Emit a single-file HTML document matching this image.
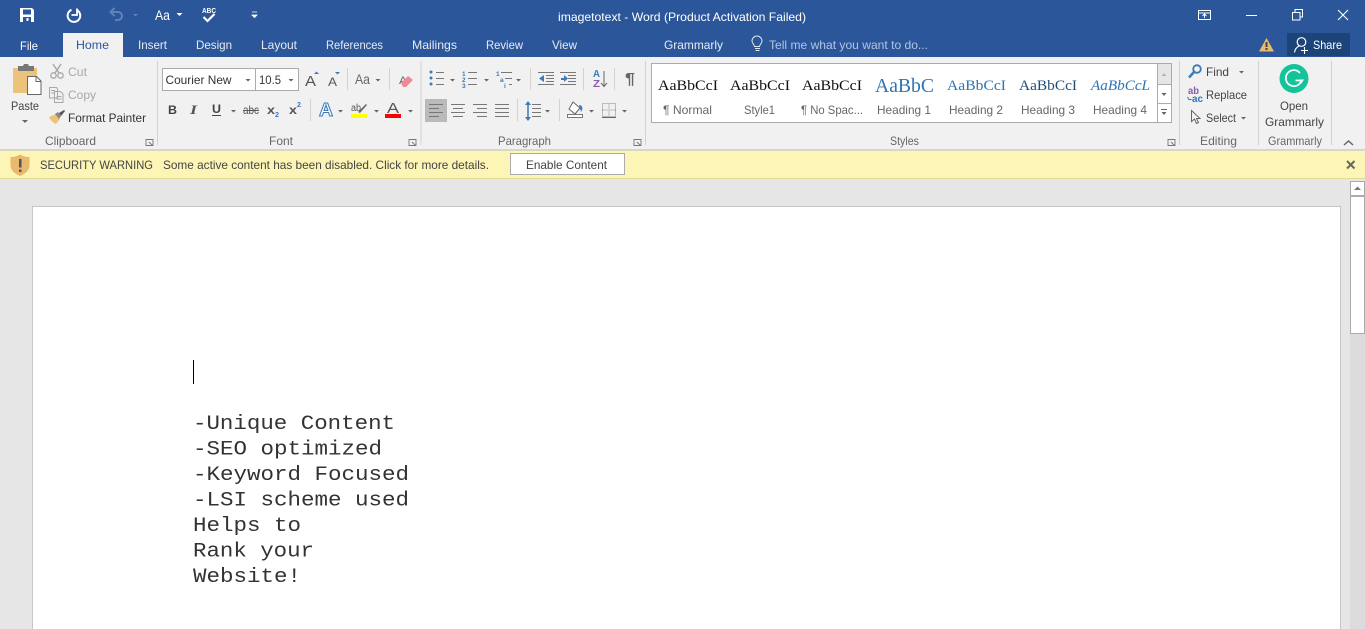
<!DOCTYPE html>
<html><head><meta charset="utf-8"><title>imagetotext - Word</title>
<style>
html,body{margin:0;padding:0;width:1365px;height:629px;overflow:hidden;background:#e6e6e6}
svg{display:block}
text{font-family:"Liberation Sans",sans-serif;font-size:12px;fill:#444;white-space:pre}
.w{fill:#fff}.t{fill:#e6ebf3}.g{fill:#666}.d{fill:#a8a8a8}
.s{font-family:"Liberation Serif",serif;font-size:15px;fill:#111}
.m{font-family:"Liberation Mono",monospace;font-size:20px;fill:#333}
.c{fill:#666}
</style></head><body>
<svg width="1365" height="629" viewBox="0 0 1365 629" xmlns="http://www.w3.org/2000/svg">
<!-- backgrounds -->
<rect width="1365" height="57" fill="#2b579a"/>
<rect y="57" width="1365" height="92" fill="#f1f1f1"/>
<rect y="149" width="1365" height="2" fill="#d8d8c0"/>
<rect y="151" width="1365" height="27" fill="#fcf5b5"/>
<rect y="178" width="1365" height="1" fill="#e2dc94"/>
<rect y="179" width="1365" height="450" fill="#e6e6e6"/>
<rect x="63" y="33" width="60" height="24" fill="#f1f1f1"/>

<!-- QAT -->
<path d="M20 8h12l2 2v12H20z M23 9.500v5h8v-5z M23 17v5h8v-5z" fill="#fff" fill-rule="evenodd"/>
<path d="M26.500 18h2v3h-2z" fill="#fff"/>
<path d="M71.500 9.800a6.300 6.300 0 1 0 5.300.2" fill="none" stroke="#fff" stroke-width="2"/>
<path d="M77 8.500v6.500h-5.500" fill="none" stroke="#fff" stroke-width="1.800"/>
<path d="M111 12h7a4 4 0 0 1 0 8h-3M114.500 8l-4 4 4 4" fill="none" stroke="#5f82b8" stroke-width="2"/>
<path d="M133 14h5l-2.500 2.500z" fill="#5f82b8"/>
<text x="155" y="20" class="w" style="font-size:14px" textLength="15" lengthAdjust="spacingAndGlyphs">Aa</text>
<path d="M176.500 13h6l-3 3z" fill="#fff"/>
<text x="202" y="13" class="w" style="font-size:7.500px;font-weight:bold" textLength="14" lengthAdjust="spacingAndGlyphs">ABC</text>
<path d="M203.500 17l4 4 7-7" fill="none" stroke="#fff" stroke-width="2.200"/>
<path d="M252 12h5M252 15h5l-2.500 2.500z" fill="#fff" stroke="#fff" stroke-width=".8"/>

<!-- title -->
<text x="558" y="21" class="w" textLength="248" lengthAdjust="spacingAndGlyphs">imagetotext - Word (Product Activation Failed)</text>
<!-- window controls -->
<path d="M1198.500 10.500h12v9h-12zM1198.500 13h12M1204.500 18v-4M1202.500 16l2-2 2 2" fill="none" stroke="#fff"/>
<path d="M1246 15.500h11" stroke="#fff"/>
<path d="M1292.500 12.500h7.500v7.500h-7.500zM1295 12v-2.500h7.500V17H1300" fill="none" stroke="#fff"/>
<path d="M1338 10l10 10M1348 10l-10 10" stroke="#fff" stroke-width="1.100"/>

<!-- tabs -->
<text x="20" y="50" class="w" textLength="18" lengthAdjust="spacingAndGlyphs">File</text>
<text x="76" y="49" style="fill:#2b579a" textLength="33" lengthAdjust="spacingAndGlyphs">Home</text>
<text x="138" y="49" class="t" textLength="29" lengthAdjust="spacingAndGlyphs">Insert</text>
<text x="196" y="49" class="t" textLength="36" lengthAdjust="spacingAndGlyphs">Design</text>
<text x="261" y="49" class="t" textLength="36" lengthAdjust="spacingAndGlyphs">Layout</text>
<text x="326" y="49" class="t" textLength="57" lengthAdjust="spacingAndGlyphs">References</text>
<text x="412" y="49" class="t" textLength="45" lengthAdjust="spacingAndGlyphs">Mailings</text>
<text x="486" y="49" class="t" textLength="37" lengthAdjust="spacingAndGlyphs">Review</text>
<text x="552" y="49" class="t" textLength="25" lengthAdjust="spacingAndGlyphs">View</text>
<text x="664" y="49" class="t" textLength="59" lengthAdjust="spacingAndGlyphs">Grammarly</text>
<path d="M755 48.500h5M755.500 50.500h4M754.500 46.500c0-2-2.500-3-2.500-5.500a5 5 0 0 1 10 0c0 2.500-2.500 3.500-2.500 5.500z" fill="none" stroke="#dfe6f0"/>
<text x="769" y="49" style="fill:#b4c5de" textLength="159" lengthAdjust="spacingAndGlyphs">Tell me what you want to do...</text>
<path d="M1266.500 38l7.500 13.500h-15z" fill="#e9b96e"/>
<path d="M1265.500 42h2v5h-2zM1265.500 48h2v2h-2z" fill="#444"/>
<rect x="1287" y="33" width="63" height="23" fill="#1c4478"/>
<circle cx="1301.500" cy="42" r="4.300" fill="none" stroke="#fff" stroke-width="1.200"/>
<path d="M1294.500 52.500c.5-3.500 2.500-5.500 4.500-6.500M1304.500 47v7M1301 50.500h7" fill="none" stroke="#fff" stroke-width="1.100"/>
<text x="1313" y="49" class="w" textLength="29" lengthAdjust="spacingAndGlyphs">Share</text>

<!-- separators -->
<path d="M157.500 61v84M421 61v84M645.500 61v84M1179.500 61v84M1258.500 61v84M1331.500 61v84" stroke="#d2d2d2"/>

<!-- Clipboard -->
<path d="M13 68h24v25H13z" fill="#edc37c"/>
<path d="M18 66h5l1-2h4l1 2h5v5H18z" fill="#777"/>
<path d="M27.500 76.500h9l4.500 4.500v13.500H27.500z" fill="#fff" stroke="#666"/>
<path d="M36 77v4.500h5" fill="none" stroke="#666"/>
<text x="11" y="110" textLength="28" lengthAdjust="spacingAndGlyphs">Paste</text>
<path d="M22 120h6l-3 3z" class="c"/>
<path d="M53 64l6 9M61 64l-6 9" stroke="#a8a8a8" stroke-width="1.500"/>
<circle cx="53.500" cy="75.500" r="2.700" fill="none" stroke="#a8a8a8" stroke-width="1.300"/>
<circle cx="60.500" cy="75.500" r="2.700" fill="none" stroke="#a8a8a8" stroke-width="1.300"/>
<text x="68" y="76" class="d" textLength="19" lengthAdjust="spacingAndGlyphs">Cut</text>
<path d="M49.500 87.500h7l1 1.500v9h-8zM54.500 91.500h6l2.500 2.500v8.500h-8.500zM51 90.500h4M51 93h3M56.500 96.500h5M56.500 99h5" fill="#f1f1f1" stroke="#a8a8a8"/>
<text x="68" y="99" class="d" textLength="28" lengthAdjust="spacingAndGlyphs">Copy</text>
<path d="M49 117l7-3 4 5-4 5c-2-.5-6-4-7-7z" fill="#edc37c"/>
<path d="M55 114l3-2 3 4-2 3z" fill="#888"/>
<path d="M59 113l5-3 1 1-4 5z" fill="#555"/>
<text x="68" y="122" style="fill:#333" textLength="78" lengthAdjust="spacingAndGlyphs">Format Painter</text>
<text x="45" y="145" class="g" textLength="51" lengthAdjust="spacingAndGlyphs">Clipboard</text>
<path id="dl" d="M146.500 139.500h6.500v6M146 139v6.500h7.500M149 142l3.500 3.500M150 145.500h3v-3" fill="none" stroke="#777" stroke-width=".9"/>

<!-- Font -->
<rect x="162.500" y="68.500" width="93" height="22" fill="#fff" stroke="#ababab"/>
<rect x="255.500" y="68.500" width="43" height="22" fill="#fff" stroke="#ababab"/>
<text x="165.500" y="84" style="fill:#333" textLength="66" lengthAdjust="spacingAndGlyphs">Courier New</text>
<text x="259" y="84" style="fill:#333" textLength="22" lengthAdjust="spacingAndGlyphs">10.5</text>
<path d="M245.500 79h5l-2.500 2.500zM288.500 79h5l-2.500 2.500z" class="c"/>
<text x="305" y="86" style="font-size:15px;fill:#555" textLength="11" lengthAdjust="spacingAndGlyphs">A</text>
<path d="M314 74h5l-2.500-2.500z" fill="#3d7ab8"/>
<text x="328" y="86" style="font-size:12px;fill:#555" textLength="9" lengthAdjust="spacingAndGlyphs">A</text>
<path d="M335 72h5l-2.500 2.500z" fill="#3d7ab8"/>
<path d="M347.500 68v22M389.500 68v22M310.500 99v22" stroke="#d2d2d2"/>
<text x="355" y="84" style="font-size:14px;fill:#666" textLength="15" lengthAdjust="spacingAndGlyphs">Aa</text>
<path d="M375.500 79h5l-2.500 2.500z" class="c"/>
<text x="399" y="84" style="font-size:11px;fill:#666" textLength="8" lengthAdjust="spacingAndGlyphs">A</text>
<path d="M401 83l7-7 5 4-7 7h-3z" fill="#ee8a96"/>

<text x="168" y="114" style="font-weight:bold;fill:#444" textLength="9" lengthAdjust="spacingAndGlyphs">B</text>
<text x="190" y="114" style="font-style:italic;font-family:'Liberation Serif',serif;font-size:13px;fill:#555;font-weight:bold" textLength="7" lengthAdjust="spacingAndGlyphs">I</text>
<text x="212" y="113" style="font-weight:bold;fill:#444" textLength="9" lengthAdjust="spacingAndGlyphs">U</text>
<path d="M212 115.500h9" stroke="#444"/>
<path d="M231 110h5l-2.500 2.500zM338 110h5l-2.500 2.500zM374 110h5l-2.500 2.500zM408 110h5l-2.500 2.500z" class="c"/>
<text x="243" y="114" style="fill:#555" textLength="16" lengthAdjust="spacingAndGlyphs">abc</text>
<path d="M243 110.500h16" stroke="#555"/>
<text x="267" y="114" style="font-weight:bold;fill:#555" textLength="8" lengthAdjust="spacingAndGlyphs">x</text>
<text x="275" y="117" style="font-size:7px;fill:#3d7ab8;font-weight:bold" textLength="4" lengthAdjust="spacingAndGlyphs">2</text>
<text x="289" y="114" style="font-weight:bold;fill:#555" textLength="8" lengthAdjust="spacingAndGlyphs">x</text>
<text x="297" y="107" style="font-size:7px;fill:#3d7ab8;font-weight:bold" textLength="4" lengthAdjust="spacingAndGlyphs">2</text>
<text x="319" y="116" style="font-size:18px;font-weight:bold;fill:#fff;stroke:#3d7ab8;stroke-width:1" textLength="14" lengthAdjust="spacingAndGlyphs">A</text>
<text x="351" y="111" style="font-size:10px;fill:#555" textLength="10" lengthAdjust="spacingAndGlyphs">ab</text>
<path d="M358 112l8-8 1 1-7 8z" fill="#666"/>
<rect x="351" y="114" width="16" height="4" fill="#ff0"/>
<text x="387" y="113" style="font-size:15px;fill:#555" textLength="12" lengthAdjust="spacingAndGlyphs">A</text>
<rect x="385" y="114" width="16" height="4" fill="#f00"/>
<text x="269" y="145" class="g" textLength="24" lengthAdjust="spacingAndGlyphs">Font</text>
<use href="#dl" x="263"/>

<!-- Paragraph -->
<circle cx="431" cy="72" r="1.500" fill="#3d7ab8"/><circle cx="431" cy="78" r="1.500" fill="#3d7ab8"/><circle cx="431" cy="84" r="1.500" fill="#3d7ab8"/>
<path d="M436 72.500h8M436 78.500h8M436 84.500h8" stroke="#777"/>
<path d="M450 79h5l-2.500 2.500zM484 79h5l-2.500 2.500zM516 79h5l-2.500 2.500zM545 110h5l-2.500 2.500zM589 110h5l-2.500 2.500zM622 110h5l-2.500 2.500z" class="c"/>
<text x="462" y="76" style="font-size:6.500px;fill:#3d7ab8;font-weight:bold">1</text>
<text x="462" y="82" style="font-size:6.500px;fill:#3d7ab8;font-weight:bold">2</text>
<text x="462" y="88" style="font-size:6.500px;fill:#3d7ab8;font-weight:bold">3</text>
<path d="M468 72.500h9M468 78.500h9M468 84.500h9" stroke="#777"/>
<text x="496" y="76" style="font-size:6.500px;fill:#3d7ab8;font-weight:bold">1</text>
<text x="500" y="82" style="font-size:6.500px;fill:#3d7ab8;font-weight:bold">a</text>
<text x="504" y="88" style="font-size:6.500px;fill:#3d7ab8;font-weight:bold">i</text>
<path d="M501 72.500h11M505 78.500h7M509 84.500h3" stroke="#777"/>
<path d="M530.500 68v22M583.500 68v22M614.500 68v22M517.500 99v22M559.500 99v22" stroke="#d2d2d2"/>
<path d="M538 72.500h16M546 75.500h8M546 78.500h8M546 81.500h8M538 84.500h16M560 72.500h16M568 75.500h8M568 78.500h8M568 81.500h8M560 84.500h16" stroke="#777"/>
<path d="M544 75v7l-5-3.500z" fill="#3d7ab8"/>
<path d="M561 78h3v-3l4 3.500-4 3.500v-2h-3z" fill="#3d7ab8"/>
<text x="593" y="77" style="font-size:10px;font-weight:bold;fill:#3d7ab8" textLength="7" lengthAdjust="spacingAndGlyphs">A</text>
<text x="593" y="87" style="font-size:10px;font-weight:bold;fill:#8a5ca8" textLength="7" lengthAdjust="spacingAndGlyphs">Z</text>
<path d="M604 71v15M601 83l3 3.500 3-3.500" fill="none" stroke="#666"/>
<text x="625" y="84" style="font-size:16px;font-weight:bold;fill:#666" textLength="10" lengthAdjust="spacingAndGlyphs">¶</text>
<rect x="425" y="99" width="22" height="23" fill="#bababa"/>
<path d="M429 104.500h14M429 108.500h10M429 112.500h14M429 116.500h10M451 104.500h14M453 108.500h10M451 112.500h14M453 116.500h10M473 104.500h14M477 108.500h10M473 112.500h14M477 116.500h10M495 104.500h14M495 108.500h14M495 112.500h14M495 116.500h14" stroke="#777"/>
<path d="M532 108.500h9M532 112.500h9M532 116.500h9M532 104.500h9" stroke="#777"/>
<path d="M528 102v18" stroke="#3d7ab8" stroke-width="1.500"/>
<path d="M525 105l3-4 3 4zM525 117l3 4 3-4z" fill="#3d7ab8"/>
<path d="M573 102l7 6-5 6-6-5z" fill="#fff" stroke="#666"/>
<path d="M579 105c3 0 4 3 3 5l-1 2z" fill="#3d7ab8"/>
<rect x="567.500" y="114.500" width="15" height="3" fill="#fff" stroke="#777"/>
<path d="M602.500 103.500h13v13h-13zM609 103.500v13M602.500 110h13" fill="none" stroke="#888" stroke-dasharray="1 1"/>
<path d="M602 117.500h14" stroke="#666"/>
<text x="498" y="145" class="g" textLength="53" lengthAdjust="spacingAndGlyphs">Paragraph</text>
<use href="#dl" x="488"/>

<!-- Styles -->
<rect x="651.500" y="63.500" width="520" height="59" fill="#fff" stroke="#ababab"/>
<rect x="1157.500" y="63.500" width="14" height="21" fill="#e6e6e6" stroke="#ababab"/>
<rect x="1157.500" y="84.500" width="14" height="19" fill="#fff" stroke="#ababab"/>
<rect x="1157.500" y="103.500" width="14" height="19" fill="#fff" stroke="#ababab"/>
<path d="M1161.500 76h5l-2.500-3z" fill="#b5b5b5"/>
<path d="M1161.500 93h5l-2.500 3zM1161.500 112h5l-2.500 3z" class="c"/>
<path d="M1161 109.500h6" stroke="#666"/>
<text x="658" y="90" class="s" textLength="60" lengthAdjust="spacingAndGlyphs">AaBbCcI</text>
<text x="730" y="90" class="s" textLength="60" lengthAdjust="spacingAndGlyphs">AaBbCcI</text>
<text x="802" y="90" class="s" textLength="60" lengthAdjust="spacingAndGlyphs">AaBbCcI</text>
<text x="875" y="92" class="s" style="font-size:20px;fill:#2e74b5" textLength="59" lengthAdjust="spacingAndGlyphs">AaBbC</text>
<text x="947" y="90" class="s" style="fill:#2e74b5" textLength="59" lengthAdjust="spacingAndGlyphs">AaBbCcI</text>
<text x="1019" y="90" class="s" style="fill:#1f4d78" textLength="58" lengthAdjust="spacingAndGlyphs">AaBbCcI</text>
<text x="1091" y="90" class="s" style="fill:#2e74b5;font-style:italic" textLength="59" lengthAdjust="spacingAndGlyphs">AaBbCcL</text>
<text x="663" y="114" class="g" textLength="49" lengthAdjust="spacingAndGlyphs">¶ Normal</text>
<text x="744" y="114" class="g" textLength="31" lengthAdjust="spacingAndGlyphs">Style1</text>
<text x="801" y="114" class="g" textLength="62" lengthAdjust="spacingAndGlyphs">¶ No Spac...</text>
<text x="877" y="114" class="g" textLength="54" lengthAdjust="spacingAndGlyphs">Heading 1</text>
<text x="949" y="114" class="g" textLength="54" lengthAdjust="spacingAndGlyphs">Heading 2</text>
<text x="1021" y="114" class="g" textLength="54" lengthAdjust="spacingAndGlyphs">Heading 3</text>
<text x="1093" y="114" class="g" textLength="54" lengthAdjust="spacingAndGlyphs">Heading 4</text>
<text x="890" y="145" class="g" textLength="29" lengthAdjust="spacingAndGlyphs">Styles</text>
<use href="#dl" x="1022"/>

<!-- Editing -->
<circle cx="1197" cy="69" r="3.800" fill="none" stroke="#3d7ab8" stroke-width="1.800"/>
<path d="M1194 72l-5 5.500" stroke="#3d7ab8" stroke-width="2.500"/>
<text x="1206" y="76" textLength="23" lengthAdjust="spacingAndGlyphs">Find</text>
<path d="M1239 71h5l-2.500 2.500zM1241 117h5l-2.500 2.500z" class="c"/>
<text x="1188" y="94" style="font-size:10px;fill:#8a5ca8;font-weight:bold" textLength="11" lengthAdjust="spacingAndGlyphs">ab</text>
<text x="1192" y="102" style="font-size:10px;fill:#2e74b5;font-weight:bold" textLength="11" lengthAdjust="spacingAndGlyphs">ac</text>
<path d="M1187.500 97l1.500 2.500h2.500" fill="none" stroke="#2e74b5"/>
<text x="1206" y="99" textLength="41" lengthAdjust="spacingAndGlyphs">Replace</text>
<path d="M1191.500 110.500v11l3-2.500 2 4.500 2-1-2-4h3.500z" fill="#f1f1f1" stroke="#666"/>
<text x="1206" y="122" textLength="30" lengthAdjust="spacingAndGlyphs">Select</text>
<text x="1200" y="145" class="g" textLength="37" lengthAdjust="spacingAndGlyphs">Editing</text>

<!-- Grammarly -->
<circle cx="1294" cy="78.500" r="14.500" fill="#15c39a"/>
<path d="M1300 73a8 8 0 1 0 1.500 7.500" fill="none" stroke="#fff" stroke-width="1.700"/>
<path d="M1295.500 80.500h6.500v-1" fill="none" stroke="#fff" stroke-width="1.700"/>
<path d="M1301 84l3-4.500h-5z" fill="#fff"/>
<text x="1280" y="110" textLength="28" lengthAdjust="spacingAndGlyphs">Open</text>
<text x="1265" y="126" textLength="59" lengthAdjust="spacingAndGlyphs">Grammarly</text>
<text x="1268" y="145" class="g" textLength="54" lengthAdjust="spacingAndGlyphs">Grammarly</text>
<path d="M1344 145l4.500-4 4.500 4" fill="none" stroke="#666" stroke-width="1.500"/>

<!-- Security bar -->
<path d="M10.500 157c4 0 7-1 9.500-2.500 2.500 1.500 5.500 2.500 9.500 2.500v8c0 6-5 9-9.500 11-4.500-2-9.500-5-9.500-11z" fill="#e9b96e"/>
<path d="M19 159h2.500v8.500H19zM19 169.500h2.500v2.500H19z" fill="#555"/>
<text x="40" y="169" style="fill:#444" textLength="113" lengthAdjust="spacingAndGlyphs">SECURITY WARNING</text>
<text x="163" y="169" style="fill:#444" textLength="326" lengthAdjust="spacingAndGlyphs">Some active content has been disabled. Click for more details.</text>
<rect x="510.500" y="153.500" width="114" height="21" fill="#fff" stroke="#ababab"/>
<text x="526" y="169" style="fill:#444" textLength="81" lengthAdjust="spacingAndGlyphs">Enable Content</text>
<path d="M1347 161l7.500 7.500M1354.500 161l-7.500 7.500" stroke="#666" stroke-width="2"/>

<!-- Document -->
<rect x="32.500" y="206.500" width="1308" height="430" fill="#fff" stroke="#c6c6c6"/>
<rect x="193" y="360" width="1" height="24" fill="#000"/>
<text x="193" y="429" class="m" textLength="202" lengthAdjust="spacingAndGlyphs">-Unique Content</text>
<text x="193" y="454.500" class="m" textLength="189" lengthAdjust="spacingAndGlyphs">-SEO optimized</text>
<text x="193" y="480" class="m" textLength="216" lengthAdjust="spacingAndGlyphs">-Keyword Focused</text>
<text x="193" y="505.500" class="m" textLength="216" lengthAdjust="spacingAndGlyphs">-LSI scheme used</text>
<text x="193" y="531" class="m" textLength="108" lengthAdjust="spacingAndGlyphs">Helps to</text>
<text x="193" y="556.500" class="m" textLength="121" lengthAdjust="spacingAndGlyphs">Rank your</text>
<text x="193" y="582" class="m" textLength="108" lengthAdjust="spacingAndGlyphs">Website!</text>

<!-- Scrollbar -->
<rect x="1350" y="181" width="15" height="448" fill="#dcdcdc"/>
<rect x="1350.500" y="181.500" width="14" height="14" fill="#fff" stroke="#ababab"/>
<path d="M1354 190h7l-3.500-3.500z" fill="#777"/>
<rect x="1350.500" y="196.500" width="14" height="137" fill="#fff" stroke="#ababab"/>
</svg>
</body></html>
